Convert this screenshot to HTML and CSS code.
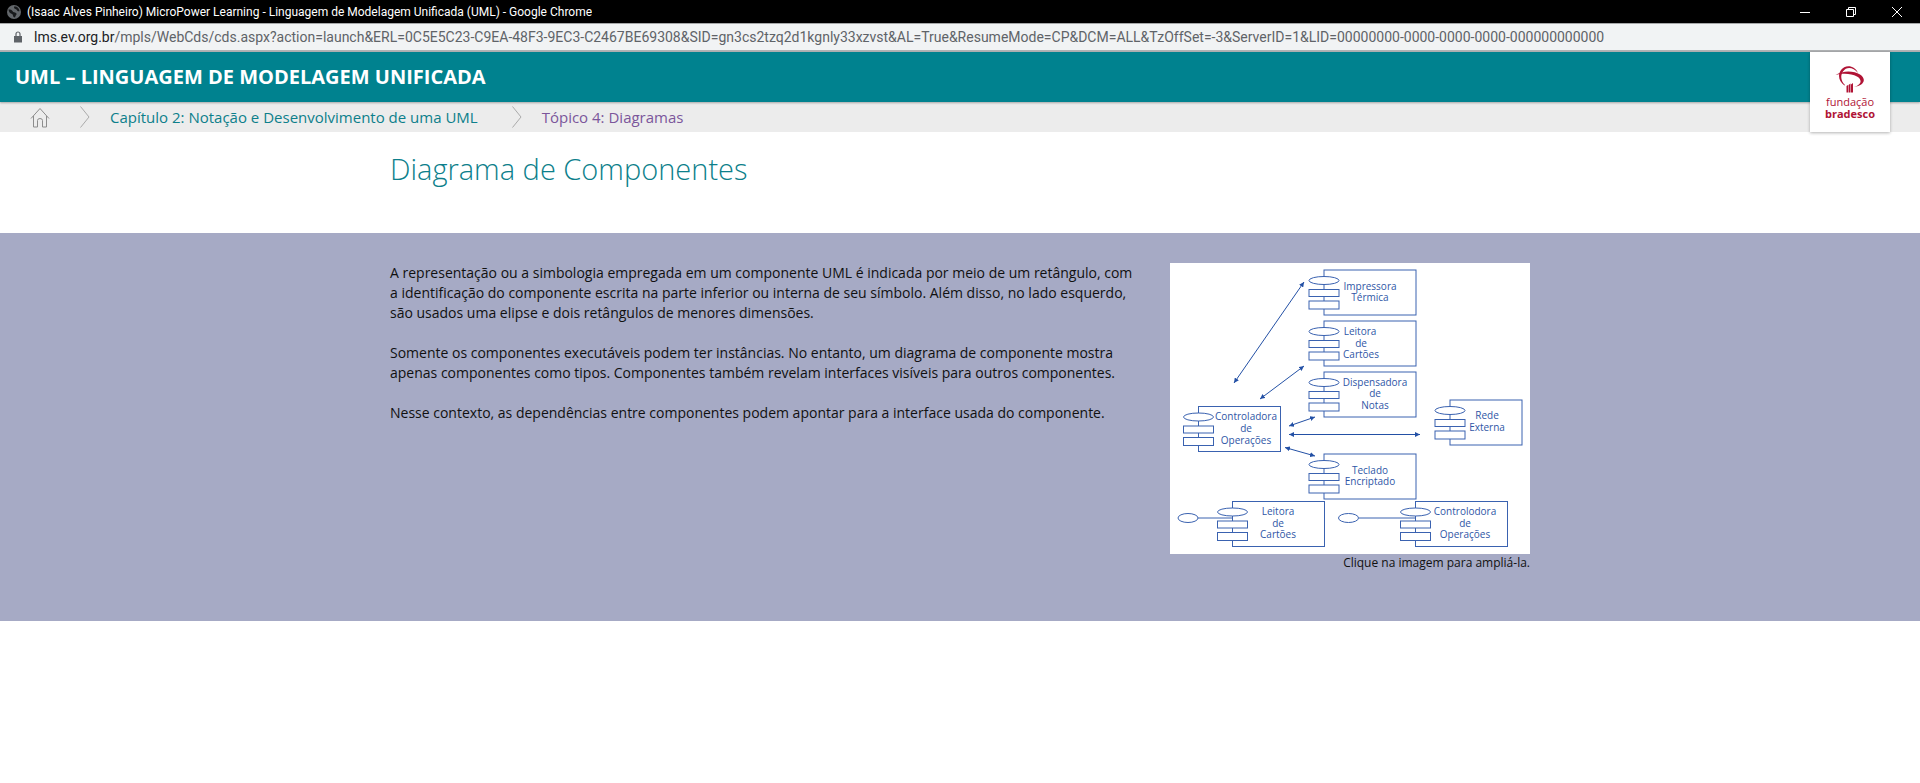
FILE: index.html
```html
<!DOCTYPE html>
<html lang="pt-BR">
<head>
<meta charset="utf-8">
<meta name="viewport" content="width=device-width, initial-scale=1">
<title>MicroPower Learning - Linguagem de Modelagem Unificada (UML)</title>
<link rel="stylesheet" href="styles.css">
</head>
<body>
<div class="window-bar">
  <svg class="window-icon" viewBox="0 0 14 14" aria-hidden="true">
    <circle cx="7" cy="7" r="7" fill="#63676b"/>
    <path d="M1.500 4.500Q4 4 5 5.500Q6 7.500 8 7.500Q10 8 9.500 9.500Q8.500 10.500 8 12.500Q6 12.500 6 10.500Q6 9 4 8.500Q2 8 1.500 4.500ZM7 1.500Q6.500 3.500 8.500 4Q10 4.500 10.500 6Q12 6.500 12.500 6Q12 2.500 9 1.500Z" fill="#17191b"/>
  </svg>
  <span class="window-title">(Isaac Alves Pinheiro) MicroPower Learning - Linguagem de Modelagem Unificada (UML) - Google Chrome</span>
  <div class="window-controls">
    <button class="window-button" type="button" aria-label="Minimizar"><svg viewBox="0 0 12 12"><path d="M1 6.500H11"/></svg></button>
    <button class="window-button" type="button" aria-label="Restaurar"><svg viewBox="0 0 12 12"><path d="M1.500 3.500H8.500V10.500H1.500ZM3.500 3.500V1.500H10.500V8.500H8.500"/></svg></button>
    <button class="window-button" type="button" aria-label="Fechar"><svg viewBox="0 0 12 12"><path d="M1 1L11 11M11 1L1 11"/></svg></button>
  </div>
</div>
<div class="address-bar">
  <svg class="lock" viewBox="0 0 8 12" aria-hidden="true"><path d="M0 5h8v6.500H0z" fill="#5f6368"/><path d="M2 5V3a2 2 0 0 1 4 0V5" fill="none" stroke="#5f6368" stroke-width="1.200"/></svg>
  <span class="url"><span class="url-host">lms.ev.org.br</span>/mpls/WebCds/cds.aspx?action=launch&amp;ERL=0C5E5C23-C9EA-48F3-9EC3-C2467BE69308&amp;SID=gn3cs2tzq2d1kgnly33xzvst&amp;AL=True&amp;ResumeMode=CP&amp;DCM=ALL&amp;TzOffSet=-3&amp;ServerID=1&amp;LID=00000000-0000-0000-0000-000000000000</span>
</div>
<header class="course-header">
  <div class="course-bar"><span class="course-title">UML – LINGUAGEM DE MODELAGEM UNIFICADA</span></div>
  <nav class="breadcrumb" aria-label="Trilha">
    <a class="home" href="#" aria-label="Início"><svg viewBox="0 0 20 21"><path d="M1 11.500L10 1.500L19 11.500M3.500 9V20H7.500V13.500Q7.500 11.500 10 11.500Q12.500 11.500 12.500 13.500V20H16.500V9"/></svg></a>
    <svg class="chevron" viewBox="0 0 10 22" aria-hidden="true"><path d="M.500.500L9 11L.500 21.500"/></svg>
    <a class="crumb crumb-chapter" href="#">Capítulo 2: Notação e Desenvolvimento de uma UML</a>
    <svg class="chevron" viewBox="0 0 10 22" aria-hidden="true"><path d="M.500.500L9 11L.500 21.500"/></svg>
    <a class="crumb crumb-topic" href="#">Tópico 4: Diagramas</a>
  </nav>
  <div class="brand">
    <svg class="brand-mark" viewBox="0 0 30 28" aria-hidden="true">
      <path d="M23 8C20 0 10 -1 6 5C2 11 4.500 17 9.500 20.500L10 20C6 16 5 11 8 6.500C11.500 1.500 18 2 23 8Z" fill="#b01335"/>
      <path d="M.500 10C8 5 19 5.500 25 9.500C32 14 29 21 19 22C26 20 28 15 22 11.500C16 8 7 8 .500 10Z" fill="#b01335"/>
      <path d="M11.500 21L13 20V27.500H11.500ZM13.500 20L15.500 18.500V27.500H13.500ZM16 19.500L18 18V27.500H16Z" fill="#b01335"/>
    </svg>
    <span class="brand-name">fundação</span>
    <strong class="brand-name">bradesco</strong>
  </div>
</header>
<main>
  <section class="page-heading"><div class="container"><h1>Diagrama de Componentes</h1></div></section>
  <section class="lesson">
    <div class="container lesson-grid">
      <div class="lesson-text">
        <p>A representação ou a simbologia empregada em um componente UML é indicada por meio de um retângulo, com a identificação do componente escrita na parte inferior ou interna de seu símbolo. Além disso, no lado esquerdo, são usados uma elipse e dois retângulos de menores dimensões.</p>
        <p>Somente os componentes executáveis podem ter instâncias. No entanto, um diagrama de componente mostra apenas componentes como tipos. Componentes também revelam interfaces visíveis para outros componentes.</p>
        <p>Nesse contexto, as dependências entre componentes podem apontar para a interface usada do componente.</p>
      </div>
      <figure class="lesson-figure">
        <button class="diagram-button" type="button" aria-label="Ampliar diagrama de componentes">
          <svg class="diagram" viewBox="0 0 360 291">
            <defs>
              <marker id="tip" viewBox="0 0 6 6" refX="6" refY="3" markerWidth="5" markerHeight="5" orient="auto-start-reverse"><path d="M0 0L6 3L0 6Z" fill="#2350a5"/></marker>
              <g id="ports">
                <ellipse cx="0" cy="10.500" rx="15" ry="4"/>
                <rect x="-15" y="19.500" width="30" height="7"/>
                <rect x="-15" y="31" width="30" height="8"/>
              </g>
            </defs>
            <g class="shapes">
              <rect x="154" y="7" width="92" height="45"/>
              <rect x="154" y="58" width="92" height="45"/>
              <rect x="154" y="109" width="92" height="45"/>
              <rect x="154" y="191" width="92" height="45"/>
              <rect x="28.500" y="143.500" width="82" height="45"/>
              <rect x="280" y="137" width="72" height="45"/>
              <rect x="62.500" y="238.500" width="92" height="45"/>
              <rect x="245.500" y="238.500" width="92" height="45"/>
              <path d="M28 255H62M189 255H246"/>
              <use href="#ports" x="154" y="7"/>
              <use href="#ports" x="154" y="58"/>
              <use href="#ports" x="154" y="109"/>
              <use href="#ports" x="154" y="191"/>
              <use href="#ports" x="28.500" y="143.500"/>
              <use href="#ports" x="280" y="137"/>
              <use href="#ports" x="62.500" y="238.500"/>
              <use href="#ports" x="245.500" y="238.500"/>
              <ellipse cx="18" cy="255" rx="10" ry="4.500"/>
              <ellipse cx="178.500" cy="255" rx="10" ry="4.500"/>
            </g>
            <g class="arrows">
              <path d="M64 120L134 19"/>
              <path d="M90 136L134 103"/>
              <path d="M119 163L145 154"/>
              <path d="M119 171.500H250"/>
              <path d="M115 184.500L145 193"/>
            </g>
            <g class="labels">
              <text x="200" y="27">Impressora</text><text x="200" y="38">Térmica</text>
              <text x="190" y="72">Leitora</text><text x="191" y="84">de</text><text x="191" y="95">Cartões</text>
              <text x="205" y="123">Dispensadora</text><text x="205" y="134">de</text><text x="205" y="146">Notas</text>
              <text x="76" y="157">Controladora</text><text x="76" y="169">de</text><text x="76" y="181">Operações</text>
              <text x="317" y="156">Rede</text><text x="317" y="168">Externa</text>
              <text x="200" y="211">Teclado</text><text x="200" y="222">Encriptado</text>
              <text x="108" y="252">Leitora</text><text x="108" y="264">de</text><text x="108" y="275">Cartões</text>
              <text x="295" y="252">Controlodora</text><text x="295" y="264">de</text><text x="295" y="275">Operações</text>
            </g>
          </svg>
        </button>
        <figcaption>Clique na imagem para ampliá-la.</figcaption>
      </figure>
    </div>
  </section>
</main>
</body>
</html>
```
FILE: styles.css
```css
* { box-sizing: border-box; }
body {
  margin: 0;
  background: #fff;
  color: #111;
  font-family: "Open Sans", "Noto Sans", sans-serif;
  font-size: 14px;
  line-height: 20px;
}
a { text-decoration: none; }
button { padding: 0; border: 0; background: none; cursor: pointer; }

.window-bar {
  display: flex;
  align-items: center;
  height: 23px;
  padding-left: 7px;
  background: #000;
  color: #fff;
}
.window-icon { flex: none; width: 14px; height: 14px; margin-right: 6px; }
.window-title {
  overflow: hidden;
  font-family: Roboto, "Open Sans", sans-serif;
  font-size: 12px;
  white-space: nowrap;
}
.window-controls { display: flex; margin-left: auto; }
.window-button { display: flex; align-items: center; justify-content: center; width: 46px; height: 20px; }
.window-button svg { width: 12px; height: 12px; fill: none; stroke: #fff; }

.address-bar {
  display: flex;
  align-items: center;
  gap: 12px;
  height: 29px;
  padding: 0 14px;
  border-top: 1px solid #a5a7a8;
  border-bottom: 2px solid #b0b2b4;
  background: #f1f3f4;
  color: #5f6368;
}
.lock { flex: none; width: 8px; height: 12px; }
.url { overflow: hidden; font-family: Roboto, "Open Sans", sans-serif; white-space: nowrap; }
.url-host { color: #202124; }

.course-header { position: relative; }
.course-bar {
  position: relative;
  display: flex;
  align-items: center;
  height: 50px;
  padding: 0 15px;
  background: #00828f;
  box-shadow: 0 1px 2px rgba(0, 0, 0, .3);
}
.course-title { color: #fff; font-size: 20px; font-weight: 700; }
.breadcrumb {
  display: flex;
  align-items: center;
  height: 30px;
  padding-left: 30px;
  background: #ececec;
  font-size: 15px;
}
.home, .home svg { display: block; width: 20px; height: 21px; }
.home svg { fill: none; stroke: #8c8c8c; }
.chevron { width: 10px; height: 22px; margin: 0 20px 0 30px; fill: none; stroke: #aaa; }
.crumb-chapter { color: #0d7f8b; }
.crumb-topic { color: #7b569b; }
.crumb-chapter + .chevron { margin-left: 34px; }
.brand {
  position: absolute;
  top: 0;
  right: 30px;
  display: flex;
  flex-direction: column;
  align-items: center;
  width: 80px;
  height: 80px;
  padding-top: 13px;
  background: #fff;
  box-shadow: 0 1px 3px rgba(0, 0, 0, .3);
  color: #b01335;
}
.brand-mark { width: 30px; height: 28px; margin-bottom: 3px; }
.brand-name { font-size: 11px; line-height: 12px; }

.container { width: 100%; max-width: 1170px; margin: 0 auto; padding: 0 15px; }
.page-heading { padding: 20px 0 48px; }
h1 { margin: 0; color: #0d7f8b; font-size: 29px; font-weight: 300; line-height: 33px; }
.lesson { padding: 30px 0 49px; background: #a6aac5; }
.lesson-grid { display: grid; grid-template-columns: minmax(0, 750fr) minmax(0, 360fr); gap: 30px; }
.lesson-text p { margin: 0 0 20px; }
.lesson-figure { margin: 0; }
.diagram-button { display: block; width: 100%; background: #fff; }
.diagram { display: block; width: 100%; height: auto; }
.shapes { fill: #fff; stroke: #3a62b0; stroke-width: 1; }
.arrows { fill: none; stroke: #2350a5; stroke-width: 1; }
.arrows path { marker-start: url(#tip); marker-end: url(#tip); }
.labels { fill: #2f56a6; font-family: "Open Sans", sans-serif; font-size: 10px; text-anchor: middle; }
figcaption { font-size: 12px; line-height: 18px; text-align: right; }

@media (max-width: 900px) {
  .lesson-grid { grid-template-columns: minmax(0, 1fr); }
}
```
